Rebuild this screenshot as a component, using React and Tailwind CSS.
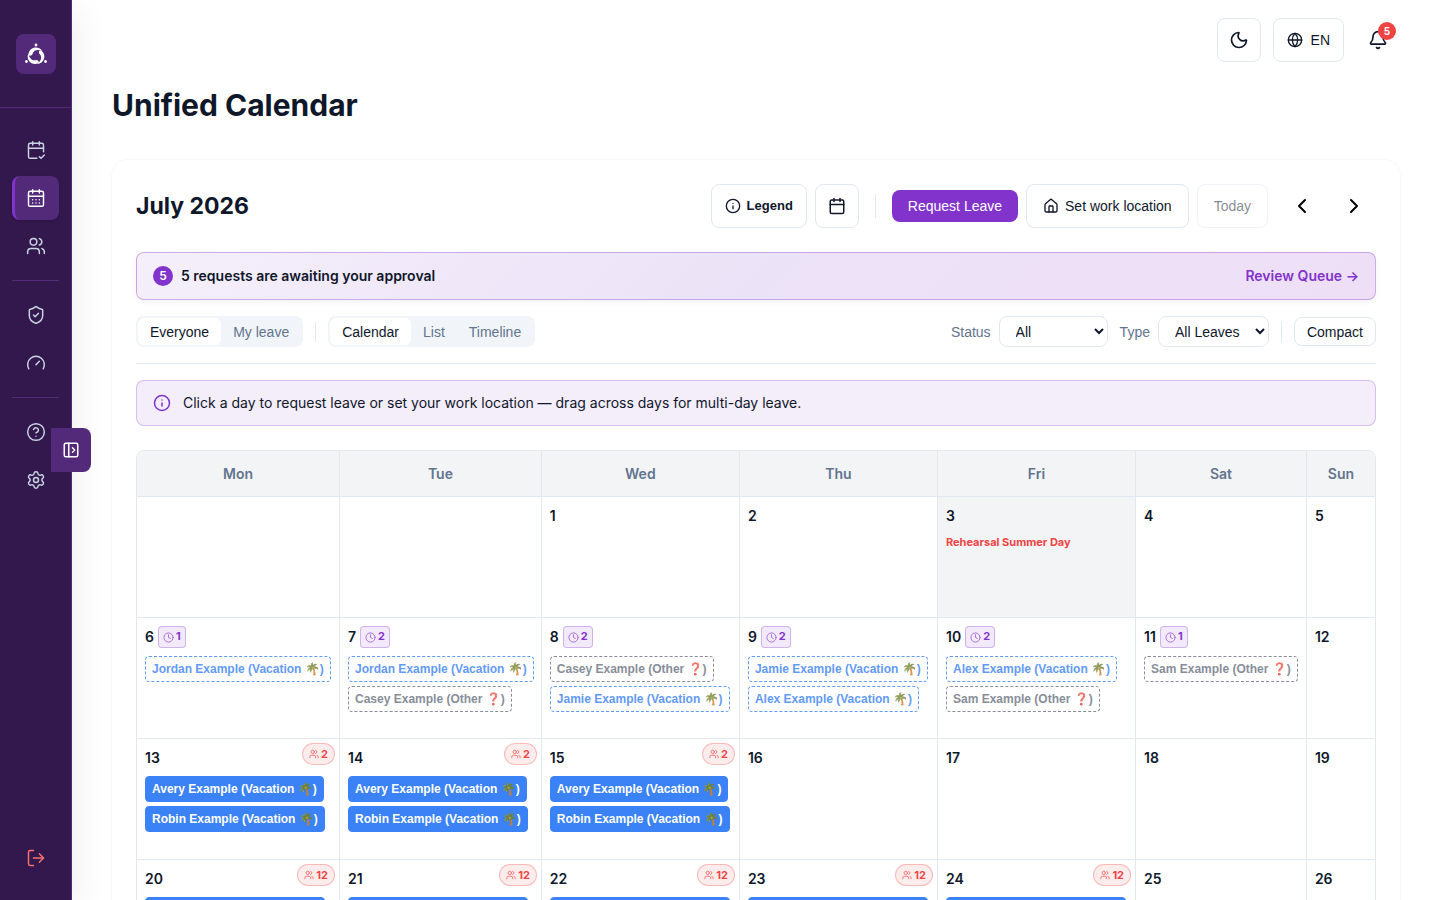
import clsx from "clsx";
import {
  Bell,
  Calendar,
  CalendarCheck2,
  CalendarDays,
  ChevronLeft,
  ChevronRight,
  CircleQuestionMark,
  Clock,
  Gauge,
  Globe,
  House,
  Info,
  LogOut,
  Moon,
  PanelLeftOpen,
  Settings,
  ShieldCheck,
  Users,
} from "lucide-react";
import { useState } from "react";

const NAV_GROUPS = [
  [
    { label: "My leave", icon: CalendarCheck2 },
    { label: "Calendar", icon: CalendarDays, active: true },
    { label: "Team", icon: Users },
  ],
  [
    { label: "Approvals", icon: ShieldCheck },
    { label: "Dashboard", icon: Gauge },
  ],
  [
    { label: "Help", icon: CircleQuestionMark },
    { label: "Settings", icon: Settings },
  ],
];

const WEEKDAYS = [
  { name: "Mon", width: "w-[16.4%]" },
  { name: "Tue", width: "w-[16.3%]" },
  { name: "Wed", width: "w-[16%]" },
  { name: "Thu", width: "w-[16%]" },
  { name: "Fri", width: "w-[16%]" },
  { name: "Sat", width: "w-[13.8%]" },
  { name: "Sun", width: "w-[5.5%]" },
];

const vacation = (name) => ({ name, type: "Vacation", emoji: "🌴" });
const other = (name) => ({ name, type: "Other", emoji: "❓" });
const awayPair = [vacation("Avery Example"), vacation("Robin Example")];
const awayTeam = [vacation("Robin Example"), vacation("Avery Example")];

const WEEKS = [
  [
    {},
    {},
    { day: 1 },
    { day: 2 },
    { day: 3, holiday: "Rehearsal Summer Day" },
    { day: 4 },
    { day: 5 },
  ],
  [
    { day: 6, pending: [vacation("Jordan Example")] },
    { day: 7, pending: [vacation("Jordan Example"), other("Casey Example")] },
    { day: 8, pending: [other("Casey Example"), vacation("Jamie Example")] },
    { day: 9, pending: [vacation("Jamie Example"), vacation("Alex Example")] },
    { day: 10, pending: [vacation("Alex Example"), other("Sam Example")] },
    { day: 11, pending: [other("Sam Example")] },
    { day: 12 },
  ],
  [
    { day: 13, away: 2, approved: awayPair },
    { day: 14, away: 2, approved: awayPair },
    { day: 15, away: 2, approved: awayPair },
    { day: 16 },
    { day: 17 },
    { day: 18 },
    { day: 19 },
  ],
  [
    { day: 20, away: 12, approved: awayTeam },
    { day: 21, away: 12, approved: awayTeam },
    { day: 22, away: 12, approved: awayTeam },
    { day: 23, away: 12, approved: awayTeam },
    { day: 24, away: 12, approved: awayTeam },
    { day: 25 },
    { day: 26 },
  ],
];

const OUTLINE_BUTTON =
  "flex h-11 items-center justify-center rounded-lg border border-slate-200 bg-white text-slate-900";

function Logo() {
  return (
    <svg viewBox="0 0 24 24" className="size-6" fill="#fff" aria-hidden="true">
      {[0, 120, 240].map((angle) => (
        <g key={angle} transform={`rotate(${angle} 12 14)`}>
          <path d="M4.6 12.4C5 5.4 14 2.8 18.4 9C14.6 7.2 9.4 7.4 8.4 12.2C7.6 14 4.6 14.2 4.6 12.4Z" />
          <circle cx="12" cy="3" r="1.4" />
        </g>
      ))}
    </svg>
  );
}

function Sidebar() {
  return (
    <aside className="sticky top-0 z-10 flex h-screen w-18 shrink-0 flex-col border-r border-[#53297a] bg-[#32184d] shadow-[8px_8px_32px_rgba(15,23,42,0.06)]">
      <div className="flex h-27 items-center justify-center border-b border-[#53297a]">
        <a
          href="#home"
          aria-label="Home"
          className="flex size-10 items-center justify-center rounded-lg bg-[#53297a]"
        >
          <Logo />
        </a>
      </div>

      <nav className="flex flex-col px-3 pt-5">
        {NAV_GROUPS.map((group, index) => (
          <div
            key={group[0].label}
            className={clsx(
              "flex flex-col gap-1",
              index > 0 && "mt-3 border-t border-[#53297a] pt-3",
            )}
          >
            {group.map(({ label, icon: Icon, active }) => (
              <a
                key={label}
                href="#nav"
                aria-label={label}
                className={clsx(
                  "flex h-11 items-center justify-center rounded-lg",
                  active
                    ? "border-l-3 border-[#8133cc] bg-[#53297a] pr-[3px] text-white shadow-sm"
                    : "text-slate-300",
                )}
              >
                <Icon size={20} strokeWidth={1.75} />
              </a>
            ))}
          </div>
        ))}
      </nav>

      <button
        type="button"
        aria-label="Log out"
        className="mx-3 mt-auto mb-5 flex h-11 items-center justify-center text-[#f87171]"
      >
        <LogOut size={20} strokeWidth={1.75} />
      </button>

      <button
        type="button"
        aria-label="Expand sidebar"
        className="absolute top-1/2 -right-5 flex h-11 w-10 -translate-y-1/2 items-center justify-center rounded-r-lg bg-[#53297a] text-white"
      >
        <PanelLeftOpen size={18} />
      </button>
    </aside>
  );
}

function TopBar() {
  return (
    <div className="flex justify-end gap-3">
      <button
        type="button"
        aria-label="Dark mode"
        className={clsx(OUTLINE_BUTTON, "w-11")}
      >
        <Moon size={20} />
      </button>
      <button
        type="button"
        className={clsx(OUTLINE_BUTTON, "gap-2 px-[13px] text-sm")}
      >
        <Globe size={16} />
        EN
      </button>
      <button
        type="button"
        aria-label="Notifications"
        className="relative flex size-11 items-center justify-center text-slate-900"
      >
        <Bell size={20} />
        <span className="absolute top-1 right-1 flex size-[18px] items-center justify-center rounded-full bg-[#ef4444] font-[Inter] text-[10px] font-bold text-white">
          5
        </span>
      </button>
    </div>
  );
}

function CalendarToolbar() {
  return (
    <div className="flex flex-wrap items-center justify-between gap-4">
      <h2 className="font-[Inter] text-[23px] font-bold">July 2026</h2>
      <div className="flex flex-wrap items-center gap-2 text-sm">
        <button
          type="button"
          className={clsx(
            OUTLINE_BUTTON,
            "gap-[6px] px-[13px] text-[13px] font-bold",
          )}
        >
          <Info size={16} />
          Legend
        </button>
        <button
          type="button"
          aria-label="Pick a date"
          className={clsx(OUTLINE_BUTTON, "w-11 text-black")}
        >
          <Calendar size={18} />
        </button>
        <div className="mx-2 h-6 w-px bg-slate-200" />
        <button
          type="button"
          className="h-8 rounded-lg bg-[#8133cc] px-4 text-white"
        >
          Request Leave
        </button>
        <button
          type="button"
          className={clsx(OUTLINE_BUTTON, "gap-[6px] px-4")}
        >
          <House size={16} />
          Set work location
        </button>
        <button
          type="button"
          disabled
          className={clsx(OUTLINE_BUTTON, "px-4 opacity-50")}
        >
          Today
        </button>
        <div className="ml-1 flex gap-2 text-black">
          <button
            type="button"
            aria-label="Previous month"
            className="flex size-11 items-center justify-center"
          >
            <ChevronLeft size={24} />
          </button>
          <button
            type="button"
            aria-label="Next month"
            className="flex size-11 items-center justify-center"
          >
            <ChevronRight size={24} />
          </button>
        </div>
      </div>
    </div>
  );
}

function Segmented({ options }) {
  const [selected, setSelected] = useState(options[0]);

  return (
    <div className="flex rounded-lg bg-slate-100 p-[2px]">
      {options.map((option) => (
        <button
          key={option}
          type="button"
          aria-pressed={option === selected}
          onClick={() => setSelected(option)}
          className={clsx(
            "h-[27px] rounded-md px-3",
            option === selected ? "bg-white text-slate-900" : "text-slate-500",
          )}
        >
          {option}
        </button>
      ))}
    </div>
  );
}

function Filters() {
  return (
    <div className="mt-4 flex flex-wrap items-center gap-3 border-b border-slate-200 pb-4 text-sm">
      <Segmented options={["Everyone", "My leave"]} />
      <div className="h-5 w-px bg-slate-200" />
      <Segmented options={["Calendar", "List", "Timeline"]} />

      <div className="ml-auto flex items-center gap-3">
        <div className="flex items-center gap-2">
          <label htmlFor="status" className="text-slate-500">
            Status
          </label>
          <select
            id="status"
            className="h-[31px] w-[109px] rounded-lg border border-slate-200 bg-white px-3"
          >
            <option>All</option>
            <option>Pending</option>
            <option>Approved</option>
          </select>
        </div>
        <div className="flex items-center gap-2">
          <label htmlFor="type" className="text-slate-500">
            Type
          </label>
          <select
            id="type"
            className="h-[31px] rounded-lg border border-slate-200 bg-white px-3"
          >
            <option>All Leaves</option>
            <option>Vacation</option>
            <option>Other</option>
          </select>
        </div>
        <div className="h-5 w-px bg-slate-200" />
        <button
          type="button"
          className="h-[29px] rounded-lg border border-slate-200 bg-white px-3"
        >
          Compact
        </button>
      </div>
    </div>
  );
}

function EventPill({ event, pending }) {
  const isVacation = event.type === "Vacation";

  return (
    <div
      className={clsx(
        "flex h-[26px] items-center rounded-[4px] border px-[6px] text-xs font-bold whitespace-nowrap",
        pending && "border-dashed opacity-80",
        pending && isVacation && "border-[#3b82f6] text-[#3b82f6]",
        pending && !isVacation && "border-gray-500 text-gray-500",
        !pending && "border-[#3b82f6] bg-[#3b82f6] text-white",
      )}
    >
      {event.name} ({event.type} {event.emoji})
    </div>
  );
}

function DayCell({ cell }) {
  const events = cell.pending ?? cell.approved ?? [];

  return (
    <td
      className={clsx(
        "relative h-[121px] border-r border-b border-slate-200 p-2 align-top last:border-r-0",
        cell.holiday && "bg-gray-100",
      )}
    >
      <div className="mb-2 flex min-h-[21px] items-center gap-1 font-[Inter] text-sm font-semibold">
        {cell.day}
        {cell.pending ? (
          <span className="flex h-[22px] items-center gap-[2px] rounded-[4px] border border-[#8133cc]/30 bg-[#8133cc]/10 px-1 text-[11px] font-bold text-[#8133cc]">
            <Clock size={11} className="opacity-70" />
            {cell.pending.length}
          </span>
        ) : null}
      </div>
      {cell.away ? (
        <span className="absolute top-1 right-1 flex h-[22px] items-center gap-[2px] rounded-full border border-[#ef4444]/30 bg-[#ef4444]/10 px-[6px] font-[Inter] text-[11px] font-bold text-[#ef4444]">
          <Users size={10} className="opacity-80" />
          {cell.away}
        </span>
      ) : null}
      {cell.holiday ? (
        <p className="font-[Inter] text-[11px] font-bold text-[#ef4444]">
          {cell.holiday}
        </p>
      ) : null}
      <div className="flex flex-col items-start gap-1">
        {events.map((event) => (
          <EventPill
            key={event.name}
            event={event}
            pending={Boolean(cell.pending)}
          />
        ))}
      </div>
    </td>
  );
}

function MonthTable() {
  return (
    <div className="mt-6 overflow-hidden rounded-lg border border-slate-200">
      <table className="w-full table-fixed border-separate border-spacing-0">
        <thead>
          <tr className="bg-gray-100">
            {WEEKDAYS.map(({ name, width }) => (
              <th
                key={name}
                scope="col"
                className={clsx(
                  width,
                  "h-[46px] border-r border-b border-slate-200 font-[Inter] text-sm font-semibold text-slate-500 last:border-r-0",
                )}
              >
                {name}
              </th>
            ))}
          </tr>
        </thead>
        <tbody>
          {WEEKS.map((week, index) => (
            <tr key={index}>
              {week.map((cell, weekday) => (
                <DayCell key={weekday} cell={cell} />
              ))}
            </tr>
          ))}
        </tbody>
      </table>
    </div>
  );
}

function App() {
  return (
    <div className="flex min-h-screen items-start bg-white font-['Liberation_Sans',Arial,sans-serif] text-slate-900">
      <Sidebar />
      <main className="min-w-0 flex-1 px-10 pt-[18px] pb-10">
        <TopBar />
        <h1 className="mt-6 font-[Inter] text-[30px] leading-[38px] font-bold">
          Unified Calendar
        </h1>

        <section className="mt-9 rounded-2xl bg-white p-6 shadow-[0_0_3px_rgba(15,23,42,0.08)]">
          <CalendarToolbar />

          <div className="mt-6 flex h-12 items-center gap-2 rounded-lg border border-[#8133cc]/35 bg-linear-135 from-[#f5effb] via-[#ece2f7] to-[#eedff7] px-4 font-[Inter] text-sm font-semibold shadow-[0_2px_6px_rgba(15,23,42,0.06)]">
            <span className="flex size-5 items-center justify-center rounded-full bg-[#8133cc] text-xs text-white">
              5
            </span>
            5 requests are awaiting your approval
            <a href="#queue" className="ml-auto text-[#8133cc]">
              Review Queue →
            </a>
          </div>

          <Filters />

          <div className="mt-4 flex h-[46px] items-center gap-3 rounded-lg border border-[#8133cc]/25 bg-[#f4edfa] px-4 font-[Inter] text-sm">
            <Info size={18} className="text-[#8133cc]" />
            Click a day to request leave or set your work location — drag across
            days for multi-day leave.
          </div>

          <MonthTable />
        </section>
      </main>
    </div>
  );
}

export default App;
